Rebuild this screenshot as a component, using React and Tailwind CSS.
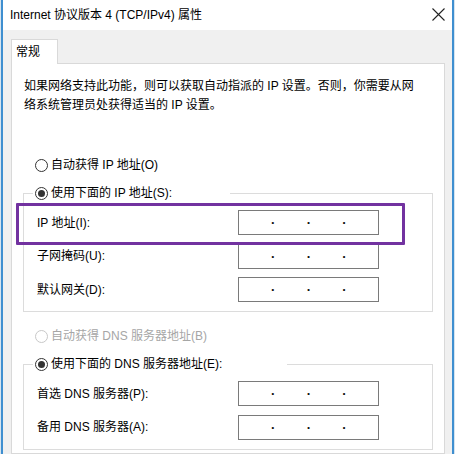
const FONT = "font-['Liberation_Sans','Noto_Sans_CJK_SC',sans-serif]";

const IP_ROWS = ["IP 地址(I):", "子网掩码(U):", "默认网关(D):"];
const DNS_ROWS = ["首选 DNS 服务器(P):", "备用 DNS 服务器(A):"];

function Radio({ checked, disabled }) {
  return (
    <span
      className={`w-[13px] h-[13px] rounded-full border flex items-center justify-center bg-white shrink-0 ${
        disabled ? "border-[#c8c8c8]" : "border-[#333333]"
      }`}
    >
      {checked && <span className="w-[7px] h-[7px] rounded-full bg-[#333333]" />}
    </span>
  );
}

function RadioRow({ label, checked, disabled }) {
  return (
    <div className="flex items-center h-[16px] gap-[3px]">
      <Radio checked={checked} disabled={disabled} />
      <span className={disabled ? "text-[#a6a6a6]" : "text-black"}>{label}</span>
    </div>
  );
}

function IpBox() {
  const Dot = () => <span className="pb-[6px] leading-none text-[#111] text-[13px] font-bold">.</span>;
  return (
    <div className="w-[141px] h-[25px] border border-[#7a7a7a] bg-white flex items-center">
      <span className="flex-1" />
      <Dot />
      <span className="flex-1" />
      <Dot />
      <span className="flex-1" />
      <Dot />
      <span className="flex-1" />
    </div>
  );
}

function FieldRow({ label }) {
  return (
    <div className="flex items-center pl-[13px]">
      <span className="w-[201px] text-black">{label}</span>
      <IpBox />
    </div>
  );
}

function GroupBox({ legend, legendWidth, rows }) {
  return (
    <div className="border border-[#dcdcdc] pb-[9px]">
      {/* legend sits on top of the border line */}
      <div className={`-mt-[9px] ml-[9px] pl-[2px] bg-white ${legendWidth}`}>
        <RadioRow label={legend} checked />
      </div>
      <div className="mt-[9px] flex flex-col gap-[8.5px]">
        {rows.map((r) => (
          <FieldRow key={r} label={r} />
        ))}
      </div>
    </div>
  );
}

export default function App() {
  return (
    <div className={`relative w-[455px] h-[454px] overflow-hidden bg-[#d6e4ef] px-[1px] text-[12px] ${FONT}`}>
      <div className="h-full border-x-2 border-[#3f8fd0] bg-[#f0f0f0] flex flex-col">
        {/* Title bar */}
        <div className="h-[30px] shrink-0 bg-white flex items-center justify-between pl-[7px] pr-[7px]">
          <span className="text-black text-[12px]">Internet 协议版本 4 (TCP/IPv4) 属性</span>
          <svg width="13" height="13" viewBox="0 0 13 13" className="mb-[1px]">
            <path d="M0.5 0.5 L12.5 12.5 M12.5 0.5 L0.5 12.5" stroke="#222" strokeWidth="1.1" />
          </svg>
        </div>

        {/* Body */}
        <div className="flex-1 pl-[8px] pr-[7px] pt-[9px] flex flex-col">
          <div className="relative z-10 -mb-px w-[47px] h-[25px] bg-white border border-b-0 border-[#d9d9d9] flex items-center pl-[4px]">
            常规
          </div>
          <div className="flex-1 bg-white border border-[#d9d9d9] pl-[11px] pr-[11px] pt-[13px]">
            <p className="pl-[1px] leading-[19px] text-black">
              如果网络支持此功能，则可以获取自动指派的 IP 设置。否则，你需要从网
              <br />
              络系统管理员处获得适当的 IP 设置。
            </p>

            <div className="mt-[42px] ml-[12px]">
              <RadioRow label="自动获得 IP 地址(O)" />
            </div>
            <div className="mt-[20px]">
              <GroupBox legend="使用下面的 IP 地址(S):" legendWidth="w-[197px]" rows={IP_ROWS} />
            </div>

            <div className="mt-[16px] ml-[12px]">
              <RadioRow label="自动获得 DNS 服务器地址(B)" disabled />
            </div>
            <div className="mt-[20px]">
              <GroupBox legend="使用下面的 DNS 服务器地址(E):" legendWidth="w-[254px]" rows={DNS_ROWS} />
            </div>
          </div>
        </div>
      </div>

      {/* annotation highlight */}
      <div className="absolute left-[16px] top-[203px] w-[389px] h-[42px] border-[3px] border-[#7232a0] rounded-[1px]" />
    </div>
  );
}
